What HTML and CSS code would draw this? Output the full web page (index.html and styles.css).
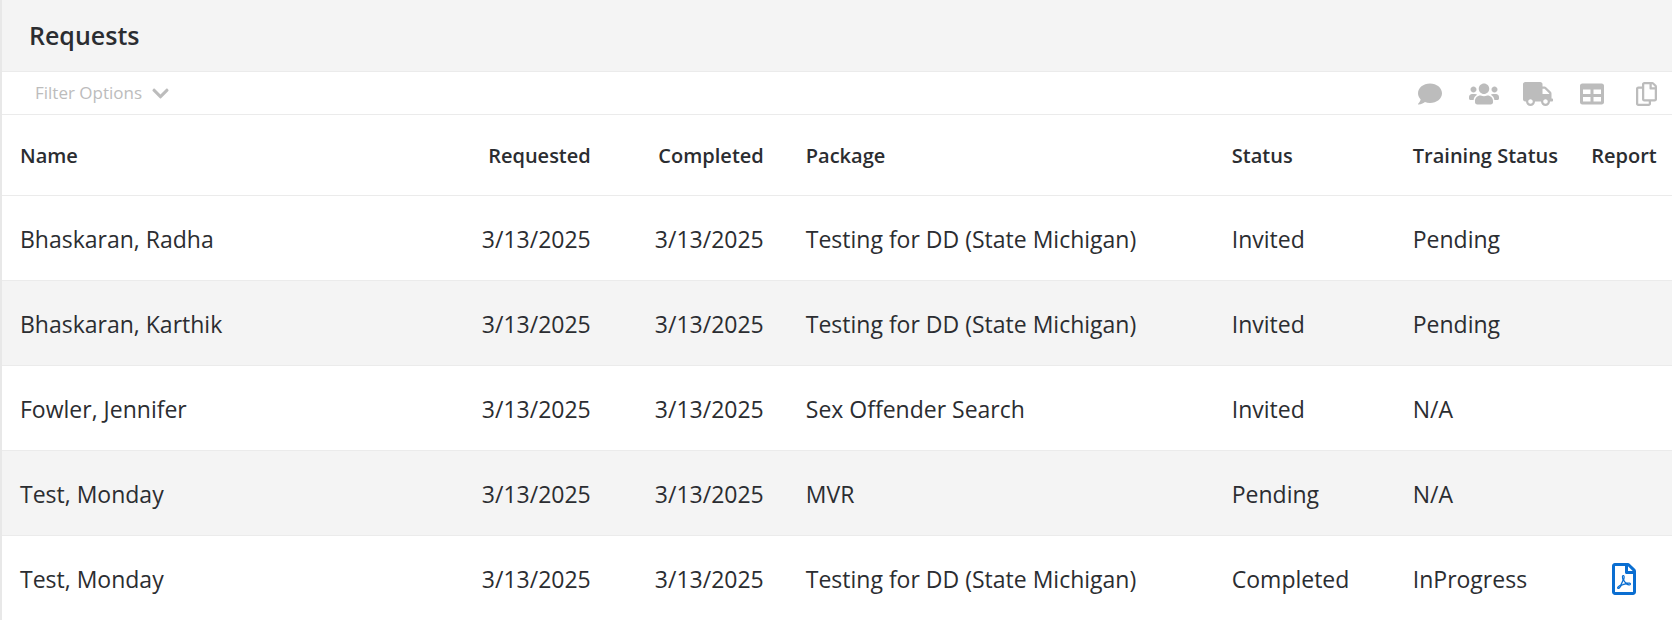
FILE: index.html
```html
<!DOCTYPE html>
<html lang="en">
<head>
  <meta charset="UTF-8" />
  <meta name="viewport" content="width=device-width, initial-scale=1.0" />
  <title>Requests</title>
  <link rel="stylesheet" href="styles.css">
</head>
<body>
  <main class="panel">
    <header class="panel-header">
      <h1>Requests</h1>
    </header>

    <div class="toolbar">
      <button class="filter-button" type="button">
        Filter Options
        <svg class="chevron" viewBox="0 0 448 512" aria-hidden="true"><path d="M207.029 381.476L12.686 187.132c-9.373-9.373-9.373-24.569 0-33.941l22.667-22.667c9.357-9.357 24.522-9.375 33.901-.04L224 284.505l154.745-154.021c9.379-9.335 24.544-9.317 33.901.04l22.667 22.667c9.373 9.373 9.373 24.569 0 33.941L240.971 381.476c-9.373 9.372-24.569 9.372-33.942 0z"/></svg>
      </button>
      <div class="tools">
        <button class="tool" type="button" aria-label="Comments">
          <svg viewBox="0 0 512 512"><path d="M256 32C114.600 32 0 125.100 0 240c0 49.600 21.400 95 57 130.700C44.500 421.100 2.700 466 2.200 466.500c-2.200 2.300-2.800 5.700-1.500 8.700S4.800 480 8 480c66.300 0 116-31.800 140.600-51.400 32.700 12.300 69 19.400 107.400 19.400 141.400 0 256-93.100 256-208S397.400 32 256 32z"/></svg>
        </button>
        <button class="tool" type="button" aria-label="Users">
          <svg viewBox="0 0 640 512"><path d="M96 224c35.300 0 64-28.700 64-64s-28.700-64-64-64-64 28.700-64 64 28.700 64 64 64zm448 0c35.300 0 64-28.700 64-64s-28.700-64-64-64-64 28.700-64 64 28.700 64 64 64zm32 32h-64c-17.600 0-33.500 7.100-45.100 18.600 40.300 22.100 68.900 62 75.100 109.400h66c17.700 0 32-14.300 32-32v-32c0-35.300-28.700-64-64-64zm-256 0c61.900 0 112-50.100 112-112S381.900 32 320 32 208 82.100 208 144s50.100 112 112 112zm76.800 32h-8.300c-20.800 10-43.900 16-68.500 16s-47.600-6-68.500-16h-8.300C179.600 288 128 339.600 128 403.200V432c0 26.500 21.500 48 48 48h288c26.500 0 48-21.500 48-48v-28.800c0-63.600-51.600-115.200-115.200-115.200zm-223.700-13.400C161.500 263.100 145.600 256 128 256H64c-35.300 0-64 28.700-64 64v32c0 17.700 14.300 32 32 32h65.900c6.300-47.400 34.900-87.300 75.200-109.400z"/></svg>
        </button>
        <button class="tool" type="button" aria-label="Vehicles">
          <svg viewBox="0 0 640 512"><path d="M624 352h-16V243.900c0-12.700-5.100-24.900-14.100-33.900L494 110.100c-9-9-21.200-14.100-33.900-14.100H416V48c0-26.500-21.500-48-48-48H48C21.500 0 0 21.500 0 48v320c0 26.500 21.500 48 48 48h16c0 53 43 96 96 96s96-43 96-96h128c0 53 43 96 96 96s96-43 96-96h48c8.800 0 16-7.200 16-16v-32c0-8.800-7.200-16-16-16zM160 464c-26.500 0-48-21.500-48-48s21.500-48 48-48 48 21.500 48 48-21.500 48-48 48zm320 0c-26.500 0-48-21.500-48-48s21.500-48 48-48 48 21.500 48 48-21.500 48-48 48zm80-208H416V144h44.100l99.900 99.900V256z"/></svg>
        </button>
        <button class="tool" type="button" aria-label="Table">
          <svg viewBox="0 0 512 512"><path d="M464 32H48C21.490 32 0 53.490 0 80v352c0 26.510 21.490 48 48 48h416c26.510 0 48-21.490 48-48V80c0-26.510-21.490-48-48-48zM224 416H64v-96h160v96zm0-160H64v-96h160v96zm224 160H288v-96h160v96zm0-160H288v-96h160v96z"/></svg>
        </button>
        <button class="tool" type="button" aria-label="Copy">
          <svg viewBox="0 0 448 512"><path d="M433.941 65.941l-51.882-51.882A48 48 0 0 0 348.118 0H176c-26.510 0-48 21.490-48 48v48H48c-26.510 0-48 21.490-48 48v320c0 26.510 21.490 48 48 48h224c26.510 0 48-21.490 48-48v-48h80c26.510 0 48-21.490 48-48V99.882a48 48 0 0 0-14.059-33.941zM266 464H54a6 6 0 0 1-6-6V150a6 6 0 0 1 6-6h74v224c0 26.510 21.490 48 48 48h96v42a6 6 0 0 1-6 6zm128-96H182a6 6 0 0 1-6-6V54a6 6 0 0 1 6-6h106v88c0 13.255 10.745 24 24 24h88v202a6 6 0 0 1-6 6zm6-256h-64V48h9.632c1.591 0 3.117.632 4.243 1.757l48.368 48.368a6 6 0 0 1 1.757 4.243V112z"/></svg>
        </button>
      </div>
    </div>

    <table class="requests">
      <thead>
        <tr>
          <th class="name">Name</th>
          <th class="date">Requested</th>
          <th class="date">Completed</th>
          <th class="package">Package</th>
          <th class="status">Status</th>
          <th class="training">Training Status</th>
          <th class="report">Report</th>
        </tr>
      </thead>
      <tbody>
        <tr>
          <td>Bhaskaran, Radha</td>
          <td class="date">3/13/2025</td>
          <td class="date">3/13/2025</td>
          <td>Testing for DD (State Michigan)</td>
          <td>Invited</td>
          <td>Pending</td>
          <td class="report"></td>
        </tr>
        <tr>
          <td>Bhaskaran, Karthik</td>
          <td class="date">3/13/2025</td>
          <td class="date">3/13/2025</td>
          <td>Testing for DD (State Michigan)</td>
          <td>Invited</td>
          <td>Pending</td>
          <td class="report"></td>
        </tr>
        <tr>
          <td>Fowler, Jennifer</td>
          <td class="date">3/13/2025</td>
          <td class="date">3/13/2025</td>
          <td>Sex Offender Search</td>
          <td>Invited</td>
          <td>N/A</td>
          <td class="report"></td>
        </tr>
        <tr>
          <td>Test, Monday</td>
          <td class="date">3/13/2025</td>
          <td class="date">3/13/2025</td>
          <td>MVR</td>
          <td>Pending</td>
          <td>N/A</td>
          <td class="report"></td>
        </tr>
        <tr>
          <td>Test, Monday</td>
          <td class="date">3/13/2025</td>
          <td class="date">3/13/2025</td>
          <td>Testing for DD (State Michigan)</td>
          <td>Completed</td>
          <td>InProgress</td>
          <td class="report">
            <a class="pdf" href="#" aria-label="Open report">
              <svg viewBox="0 0 384 512"><path d="M369.900 97.900L286 14C277 5 264.800-.1 252.100-.1H48C21.500 0 0 21.500 0 48v416c0 26.500 21.500 48 48 48h288c26.500 0 48-21.500 48-48V131.900c0-12.700-5.100-25-14.100-34zM332.100 128H256V51.900l76.100 76.100zM48 464V48h160v104c0 13.300 10.700 24 24 24h104v288H48zm250.200-143.700c-12.200-12-47-8.700-64.400-6.500-17.200-10.500-28.700-25-36.800-46.300 3.900-16.100 10.100-40.600 5.400-56-4.200-26.200-37.800-23.600-42.600-5.900-4.400 16.100-.4 38.500 7 67.100-10 23.900-24.900 56-35.400 74.400-20 10.300-47 26.200-51 46.200-3.300 15.800 26 55.200 76.100-31.200 22.400-7.400 46.800-16.500 68.400-20.100 18.900 10.200 41 17 55.800 17 25.500 0 28-28.200 17.500-38.700zm-198.100 77.800c5.100-13.700 24.500-29.500 30.400-35-19 30.300-30.400 35.700-30.400 35zm81.600-190.600c7.400 0 6.700 32.100 1.800 40.800-4.400-13.900-4.300-40.800-1.800-40.800zm-24.400 136.600c9.700-16.900 18-37 24.700-54.700 8.300 15.100 18.900 27.200 30.100 35.500-20.800 4.300-38.900 13.100-54.800 19.200zm131.600-5s-5 6-37.300-7.800c35.100-2.600 40.900 5.400 37.300 7.800z"/></svg>
            </a>
          </td>
        </tr>
      </tbody>
    </table>
  </main>
</body>
</html>
```
FILE: styles.css
```css
* {
  box-sizing: border-box;
}
body {
  margin: 0;
  font-family: "Segoe UI", "Open Sans", "Noto Sans", sans-serif;
  color: #2b2d31;
  background-color: white;
}
.panel {
  border-left: 2px solid #e8e8e8;
}
.panel-header {
  padding: 15px 27px 16px;
  background-color: #f4f4f4;
  border-bottom: 1px solid #ebebeb;
}
h1 {
  margin: 0;
  font-size: 25px;
  line-height: 40px;
  font-weight: 600;
}
.toolbar {
  display: flex;
  justify-content: space-between;
  align-items: center;
  padding: 6px 11px 6px 33px;
  border-bottom: 1px solid #ebebeb;
}
button {
  padding: 0;
  border: none;
  background: none;
  font-family: inherit;
  color: #bcbcbc;
  cursor: pointer;
}
svg {
  display: block;
  fill: currentColor;
}
.filter-button {
  display: flex;
  align-items: center;
  gap: 10px;
  font-size: 17px;
  line-height: 30px;
}
.chevron {
  width: 17px;
  height: 19px;
}
.tools {
  display: flex;
  gap: 24px;
  padding-top: 2px;
}
.tool {
  display: flex;
  justify-content: center;
  width: 30px;
}
.tool svg {
  height: 24px;
}
.requests {
  width: 100%;
  border-collapse: separate;
  border-spacing: 0;
}
th, td {
  padding: 25px 18px 23px;
  border-bottom: 1px solid #ebebeb;
  text-align: left;
  white-space: nowrap;
  line-height: 36px;
}
th {
  padding: 23px 18px 21px;
  font-size: 20px;
  font-weight: 600;
}
td {
  font-size: 23px;
}
tbody tr:nth-child(even) {
  background-color: #f4f4f4;
}
tbody tr:last-child td {
  border-bottom: none;
}
.date {
  width: 173px;
  padding-right: 24px;
  text-align: right;
}
.package {
  width: 426px;
}
.status {
  width: 181px;
}
.training {
  width: 179px;
}
.report {
  width: 96px;
  padding-left: 0;
  padding-right: 0;
  text-align: center;
}
.pdf {
  display: flex;
  justify-content: center;
  color: #0a6ed1;
}
.pdf svg {
  width: 24px;
  height: 32px;
}
```
